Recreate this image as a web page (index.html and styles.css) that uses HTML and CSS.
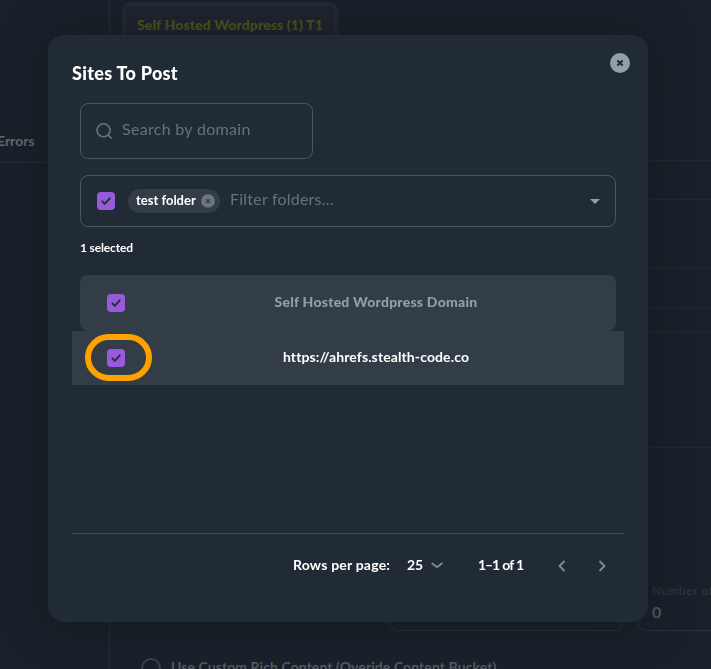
FILE: index.html
```html
<!DOCTYPE html>
<html lang="en">
<head>
<meta charset="utf-8">
<title>Sites To Post</title>
<link rel="stylesheet" href="styles.css">
</head>
<body>
<div class="page">
  <aside class="side"><div class="side-tab">Errors</div></aside>
  <main class="main">
    <div class="tier"><span class="tier-text">Self Hosted Wordpress (1) T1</span></div>
    <div class="lines">
      <div class="line l1"></div><div class="line l2"></div><div class="line l3"></div>
      <div class="line l4"></div><div class="line l5"></div><div class="line l6"></div>
    </div>
    <div class="fields">
      <div class="field"></div>
      <div class="field"><span class="field-label">Number of</span><b class="field-value">0</b></div>
    </div>
    <div class="option"><span class="radio"></span><span class="option-text">Use Custom Rich Content (Overide Content Bucket)</span></div>
  </main>
</div>

<section class="dialog" role="dialog">
  <header class="head">
    <h1 class="title"><span>Sites To Post</span></h1>
    <button class="close" aria-label="Close"><svg width="20" height="20" viewBox="0 0 20 20"><path d="M7.4 7.4l5.2 5.2M12.6 7.4l-5.2 5.2" stroke="#212b35" stroke-width="2.1"/></svg></button>
  </header>
  <div class="search">
    <svg width="18" height="18" viewBox="0 0 18 18" fill="none" stroke="#637381" stroke-width="1.6" stroke-linecap="round"><circle cx="7.5" cy="8.3" r="6.5"/><path d="M12.3 13.1l2.9 2.9"/></svg>
    <span class="search-text">Search by domain</span>
  </div>
  <div class="filter">
    <span class="check"><svg width="18" height="18" viewBox="0 0 18 18"><path d="M5.4 9.4l2.4 2.5 4.9-5.6"/></svg></span>
    <span class="chip"><span class="chip-text">test folder</span><svg width="14" height="14" viewBox="0 0 14 14"><circle cx="7" cy="7" r="6.8" fill="#6c747c"/><path d="M5.3 5.3l3.4 3.4M8.7 5.3L5.3 8.7" stroke="#333d47" stroke-width="1.5"/></svg></span>
    <span class="filter-text">Filter folders...</span>
    <svg class="caret" width="10" height="5" viewBox="0 0 10 5"><path d="M0 0h10L5 5z" fill="#919eab"/></svg>
  </div>
  <div class="count"><span>1 selected</span></div>
  <div class="table">
    <div class="row row-head">
      <span class="check"><svg width="18" height="18" viewBox="0 0 18 18"><path d="M5.4 9.4l2.4 2.5 4.9-5.6"/></svg></span>
      <div class="cell"><span class="head-text">Self Hosted Wordpress Domain</span></div>
    </div>
    <div class="row row-body">
      <span class="check"><svg width="18" height="18" viewBox="0 0 18 18"><path d="M5.4 9.4l2.4 2.5 4.9-5.6"/></svg><i class="marker"></i></span>
      <div class="cell"><span class="url-text">https://ahrefs.stealth-code.co</span></div>
    </div>
  </div>
  <footer class="pager">
    <span class="rows-label">Rows per page:</span>
    <span class="rows-value">25</span>
    <svg class="down" width="12" height="7" viewBox="0 0 12 7"><path d="M.6 1L6 5.2 11.4 1"/></svg>
    <span class="range">1–1 of 1</span>
    <svg class="prev" width="8" height="12" viewBox="0 0 8 12"><path d="M6.5 1L1.5 6l5 5"/></svg>
    <svg class="next" width="8" height="12" viewBox="0 0 8 12"><path d="M1.5 1l5 5-5 5"/></svg>
  </footer>
</section>
</body>
</html>
```

FILE: styles.css
```css
* { box-sizing: border-box; }
html, body { margin: 0; height: 669px; overflow: hidden; }
body { background: #19212a; color: #fff; font-family: Lato, "Liberation Sans", sans-serif; }
svg { display: block; flex: none; }
span { white-space: nowrap; }

.page { display: flex; width: 711px; height: 669px; }
.side { width: 110px; flex: none; border-right: 1px solid #252d36; padding-top: 120px; }
.side-tab { height: 43px; border-bottom: 1px solid #252d36; line-height: 42px; color: #666b72; font-size: 14px; font-weight: 700; text-indent: -3px; }
.main { flex: 1; min-width: 0; height: 669px; overflow: hidden; display: flex; flex-direction: column; }
.tier { width: 216px; height: 60px; flex: none; margin: 2px 0 0 12px; border: 4px solid #222a33; border-radius: 8px; background: #1e262f; padding: 9px 0 0 11px; line-height: 20px; font-size: 14px; font-weight: 900; letter-spacing: .12px; color: #54581c; }
.lines { margin-left: 538px; height: 516px; flex: none; padding-top: 98px; }
.line { border-top: 1px solid #222931; }
.l2 { margin-top: 38px; }
.l3 { margin-top: 68px; }
.l4 { margin-top: 38px; }
.l5 { margin-top: 24px; }
.l6 { margin-top: 114px; }
.fields { display: flex; gap: 16px; margin-left: 280px; height: 53px; flex: none; }
.field { width: 232px; flex: none; border: 1px solid #2a323a; border-radius: 8px; border-top: 0; display: flex; flex-direction: column; padding: 5px 0 0 13px; }
.field-label { font-size: 12px; line-height: 16px; color: #323a43; letter-spacing: .5px; }
.field-value { font-size: 16px; line-height: 25px; color: #565c63; }
.option { display: flex; gap: 10px; margin: 27px 0 0 31px; }
.radio { width: 20px; height: 20px; border: 2px solid #3d444c; border-radius: 50%; flex: none; }
.option-text { font-size: 14px; line-height: 18px; color: #555b62; font-weight: 700; letter-spacing: .08px; }

.dialog { position: fixed; left: 48px; top: 35px; width: 600px; height: 587px; background: #212b35; border-radius: 16px; padding: 0 24px; display: flex; flex-direction: column; }
.dialog { box-shadow: 0 0 42px 2px rgba(20, 20, 26, .6); }
.head { height: 68px; display: flex; align-items: flex-start; justify-content: space-between; flex: none; }
.title { margin: 24px 0 0; font-size: 18px; line-height: 28px; font-weight: 900; letter-spacing: .3px; }
.close { width: 20px; height: 20px; border: 0; padding: 0; border-radius: 50%; background: #919eab; margin: 18px -6px 0 0; }
.search { width: 233px; height: 56px; margin-left: 8px; flex: none; border: 1px solid #4b555f; border-radius: 8px; padding: 0 15px; display: flex; align-items: center; gap: 8px; }
.search-text, .filter-text { font-size: 16px; line-height: 20px; color: #637381; padding-bottom: 4px; letter-spacing: .3px; }
.filter { height: 52px; margin: 16px 8px 0; flex: none; border: 1px solid #4b555f; border-radius: 8px; padding: 0 15px 0 16px; display: flex; align-items: center; }
.filter-text { margin-left: 10px; letter-spacing: .22px; }
.caret { margin-left: auto; }
.check { width: 18px; height: 18px; flex: none; border-radius: 4px; background: #9859dd; position: relative; }
.check path { fill: none; stroke: #27303a; stroke-width: 2; stroke-linecap: round; stroke-linejoin: round; }
.chip { width: 92px; height: 24px; margin-left: 13px; border-radius: 12px; background: #333d47; padding: 0 5px 0 8px; display: flex; align-items: center; justify-content: space-between; font-size: 13px; font-weight: 700; }
.chip-text { padding-bottom: 2px; }
.count { margin: 12px 0 0 8px; height: 18px; line-height: 18px; font-size: 12px; font-weight: 700; letter-spacing: -.15px; flex: none; }
.table { margin-top: 18px; flex: 1; }
.row { display: flex; align-items: center; background: #333d47; font-size: 14px; font-weight: 700; }
.row .cell { flex: 1; text-align: center; padding-bottom: 3px; }
.row-head { height: 56px; margin: 0 8px; border-radius: 8px; padding-left: 27px; color: #919eab; }
.row-head .cell { padding-left: 11px; }
.head-text { font-weight: 900; letter-spacing: .23px; }
.row-body { height: 54px; padding-left: 35px; }
.row-body .cell { padding-left: 11px; padding-right: 8px; }
.url-text { letter-spacing: .11px; }
.marker { position: absolute; left: -22px; top: -15px; width: 67px; height: 47px; border: 6px solid #ffa200; border-radius: 24px; }
.pager { height: 89px; flex: none; border-top: 1px solid #414b54; display: flex; align-items: flex-start; padding: 21px 0 0 221px; font-size: 14px; line-height: 20px; font-weight: 700; }
.pager path { fill: none; stroke: #808d99; stroke-width: 1.8; }
.rows-label { width: 114px; letter-spacing: .2px; }
.rows-value { width: 24px; }
.down { margin-top: 7px; }
.range { margin-left: 35px; width: 80px; letter-spacing: -1.1px; word-spacing: 1px; }
.prev { margin-top: 5px; }
.next { margin: 5px 0 0 32px; }
```
